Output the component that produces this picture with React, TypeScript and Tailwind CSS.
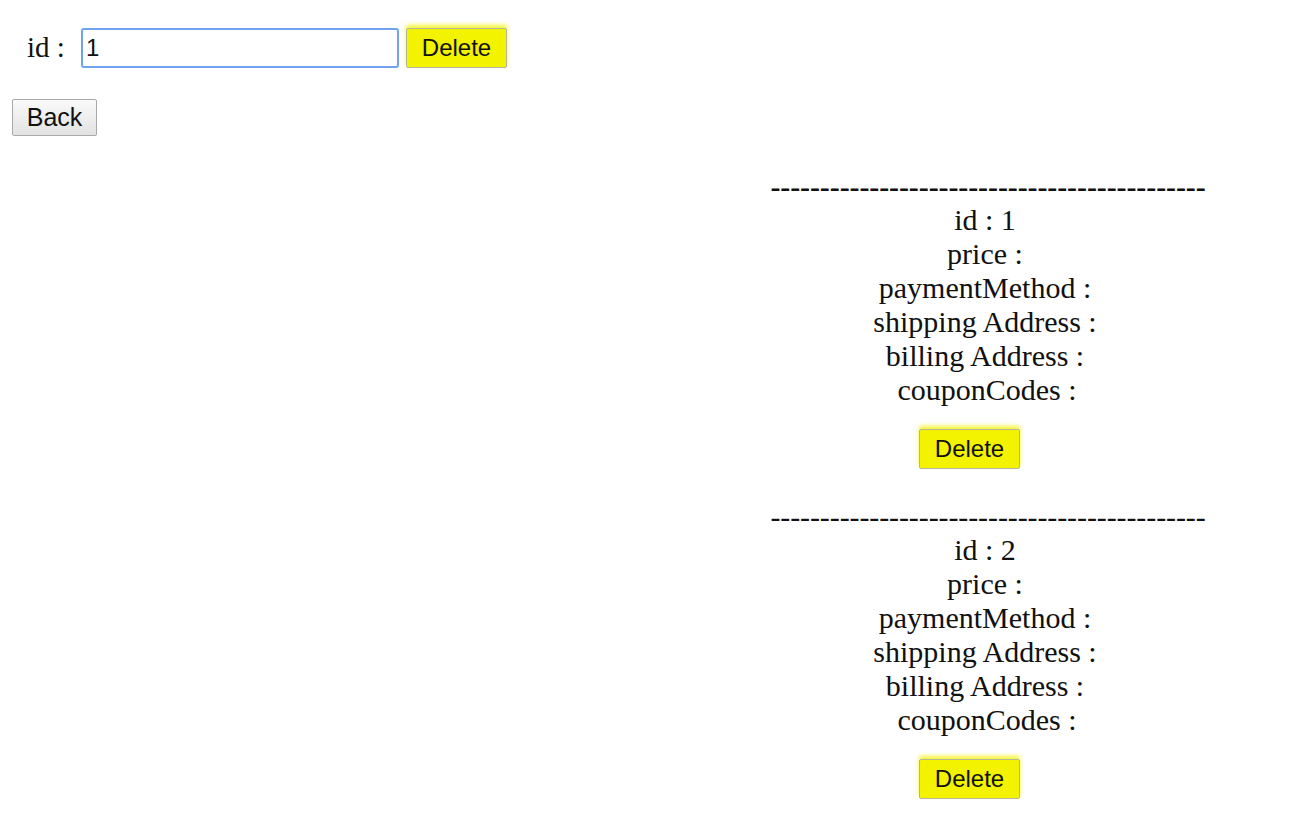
import React from "react";

const orders = [{ id: 1 }, { id: 2 }];

const serif = "font-['Liberation_Serif','Times_New_Roman',serif]";
const sans = "font-['Liberation_Sans',Arial,sans-serif]";

const DeleteButton = () => (
    <button
        className={`${sans} h-[40px] w-[101px] bg-[#f3f300] border border-[#b4b4a0] rounded-[2px] text-[24px] leading-none text-[#111] shadow-[0_-3px_4px_rgba(243,243,0,0.8)]`}
    >
        Delete
    </button>
);

const OrderCard = ({ id, bold }: { id: number; bold?: boolean }) => (
    <div className="flex flex-col items-center pb-[31px]">
        <div className={`h-[34px] leading-[34px] pl-[6px] whitespace-nowrap tracking-[-0.1px] ${bold ? "font-bold" : ""}`}>
            {"-".repeat(44)}
        </div>
        <div className="h-[34px] leading-[32px]">id : {id}</div>
        <div className="h-[34px] leading-[32px]">price :</div>
        <div className="h-[34px] leading-[32px]">paymentMethod :</div>
        <div className="h-[34px] leading-[32px]">shipping Address :</div>
        <div className="h-[34px] leading-[32px]">billing Address :</div>
        <div className="h-[34px] leading-[32px] pl-[4px]">couponCodes :</div>
        <div className="flex mt-[21px] mr-[31px]">
            <DeleteButton />
        </div>
    </div>
);

const App = () => {
    const [id, setId] = React.useState("1");

    return (
        <div className={`min-h-screen w-[1300px] bg-white text-[#111] ${serif} text-[30px]`}>
            <div className="flex items-center pt-[26px] pl-[27px]">
                <span className="w-[54px] text-[29px]">id :</span>
                <input
                    value={id}
                    onChange={(e) => setId(e.target.value)}
                    className={`${sans} h-[40px] w-[318px] border-2 border-[#6fa1f0] rounded-[3px] px-[3px] text-[24px] text-[#111] outline-none`}
                />
                <div className="flex ml-[7px]">
                    <DeleteButton />
                </div>
            </div>

            <div className="flex pl-[12px] pt-[29px]">
                <button
                    className={`${sans} h-[37px] w-[85px] border border-[#a8a8a8] rounded-[2px] bg-gradient-to-b from-[#fafafa] to-[#e2e2e2] text-[25px] leading-none text-[#111]`}
                >
                    Back
                </button>
            </div>

            <div className="ml-[762px] w-[446px] mt-[34px]">
                {orders.map((o, i) => (
                    <OrderCard key={o.id} id={o.id} bold={i === 0} />
                ))}
            </div>
        </div>
    );
};

export default App;
